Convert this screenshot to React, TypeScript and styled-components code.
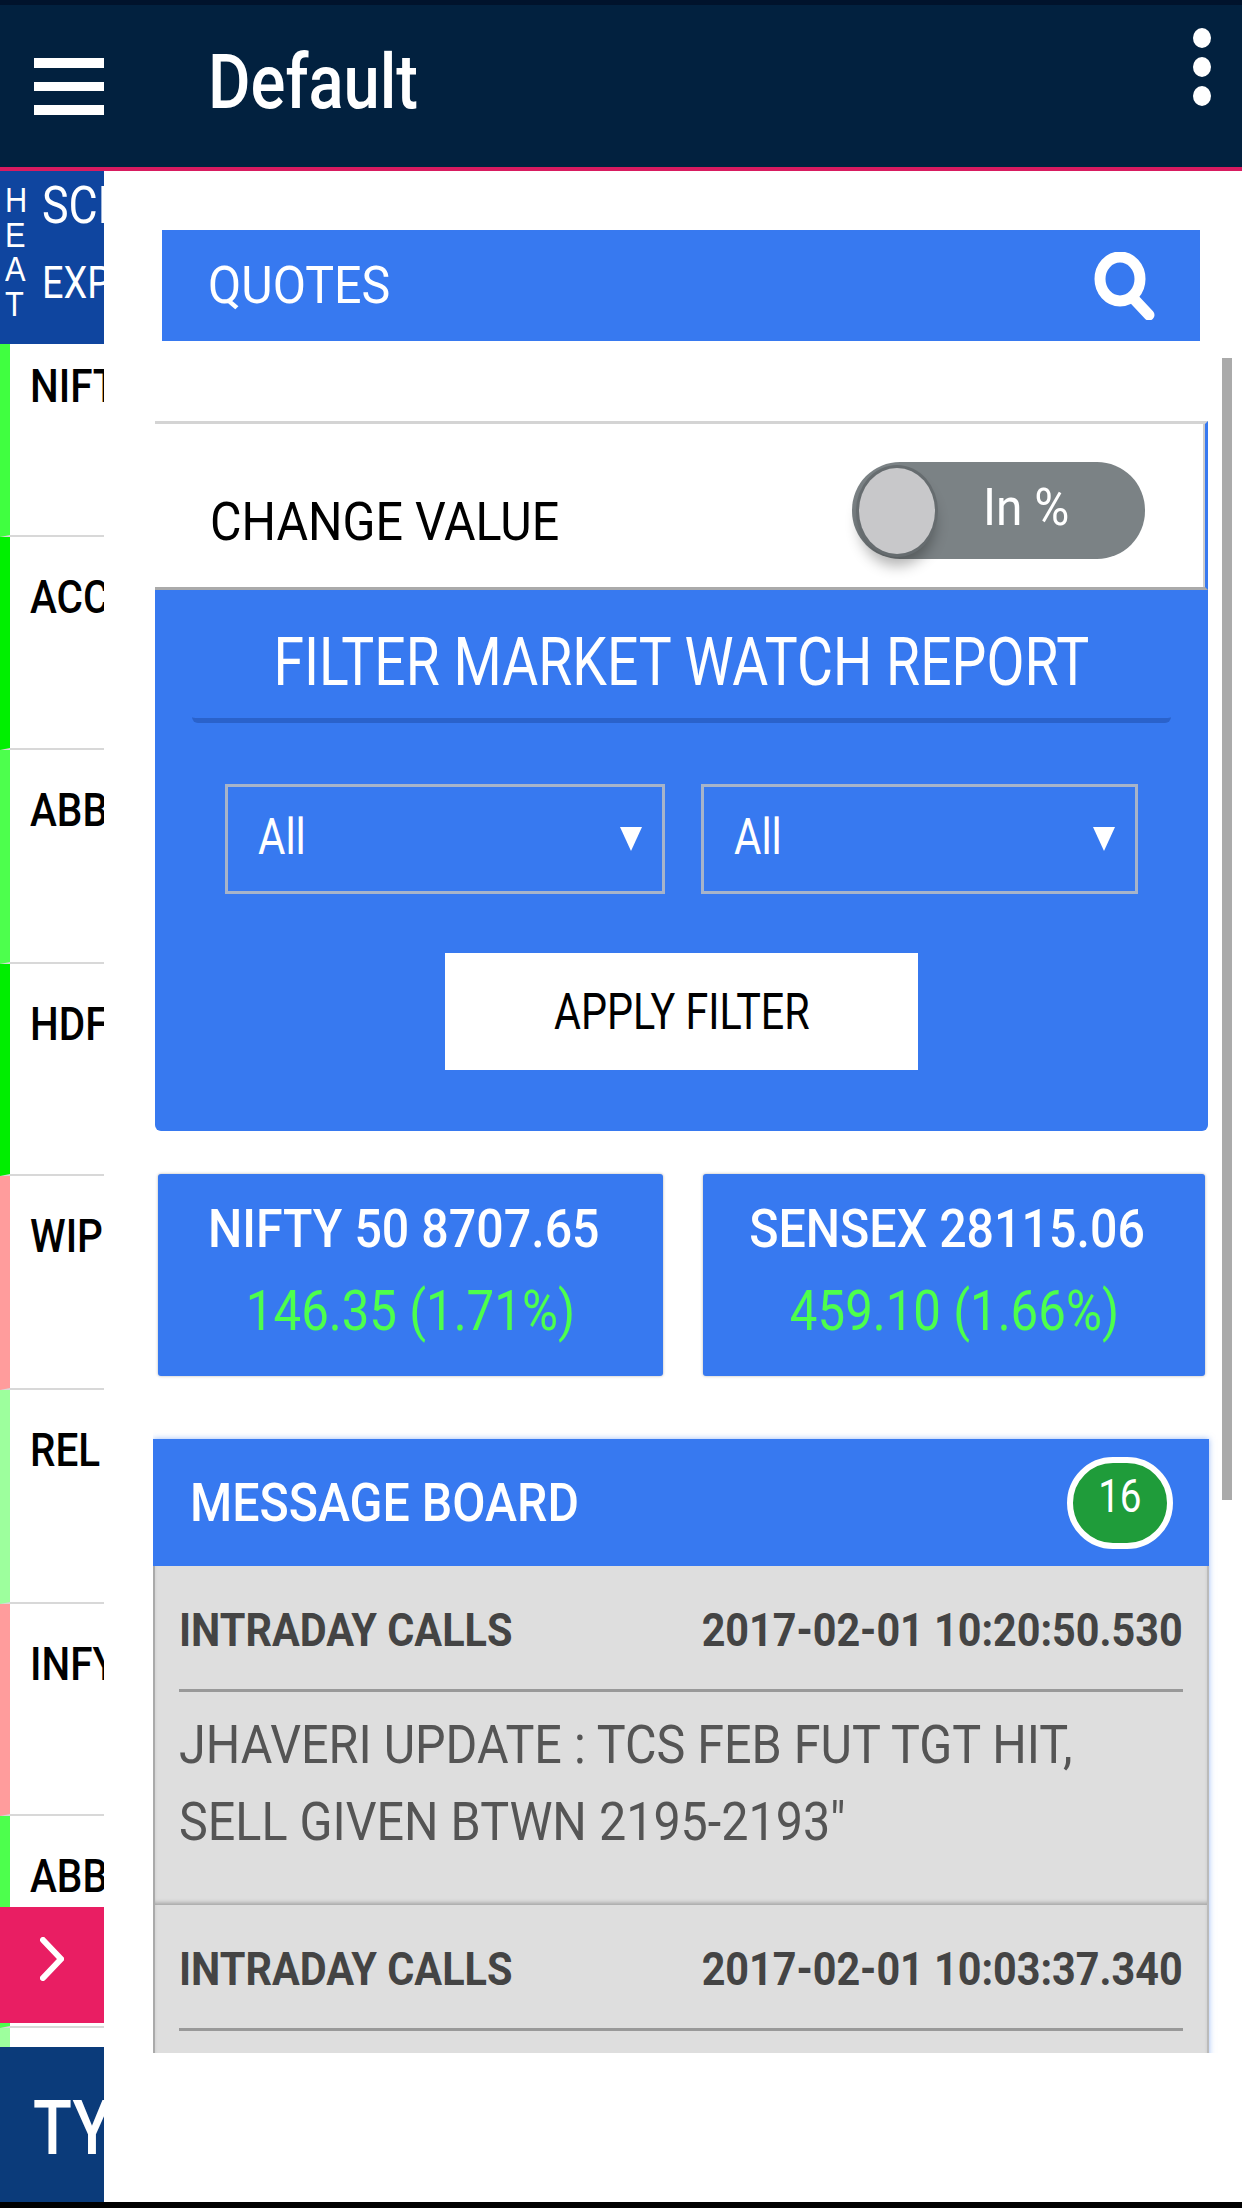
import React from 'react';
import styled, { createGlobalStyle, css } from 'styled-components';

// the screenshot is stretched vertically, so text is narrowed to match
const narrow = (sx: number, origin = 'left') => css`
  display: inline-block;
  white-space: nowrap;
  transform: scaleX(${sx});
  transform-origin: ${origin} center;
`;

const GlobalStyle = createGlobalStyle`
  html, body {
    margin: 0;
    padding: 0;
    background: #fff;
    font-family: Roboto, "Liberation Sans", sans-serif;
  }
  * { box-sizing: border-box; }
`;

const Page = styled.div`
  position: relative;
  width: 1242px;
  height: 2208px;
  display: flex;
  flex-direction: column;
  overflow: hidden;
  background: #000;
`;

const Header = styled.header`
  height: 171px;
  flex: none;
  display: flex;
  align-items: flex-start;
  background: #02213f;
  border-top: 5px solid #01132c;
  border-bottom: 4px solid #d81b60;
  padding: 0 31px 0 34px;
`;

const Burger = styled.div`
  width: 70px;
  margin-top: 53px;
  display: flex;
  flex-direction: column;
  gap: 14px;
  span {
    display: block;
    height: 9.5px;
    background: #fff;
  }
`;

const Title = styled.h1`
  ${narrow(0.857)};
  margin: 32px 0 0 104px;
  font-size: 76px;
  line-height: 90px;
  font-weight: 500;
  color: #fff;
`;

const Dots = styled.div`
  margin: 23px 0 0 auto;
  display: flex;
  flex-direction: column;
  gap: 9px;
  span {
    display: block;
    width: 18px;
    height: 20px;
    border-radius: 50%;
    background: #fff;
  }
`;

const Body = styled.div`
  flex: 1;
  display: flex;
  min-height: 0;
  background: #fff;
`;

const Sidebar = styled.aside`
  position: relative;
  width: 104px;
  flex: none;
  overflow: hidden;
  background: #fff;
`;

const SideHead = styled.div`
  height: 173px;
  display: flex;
  background: #0f459f;
  color: #fff;
  overflow: hidden;
`;

const HeatWord = styled.div`
  width: 34px;
  flex: none;
  padding: 12px 0 0 5px;
  font-family: "Liberation Sans", sans-serif;
  font-size: 35px;
  line-height: 34.5px;
  span {
    ${narrow(0.88)};
    display: block;
  }
`;

const SideColumns = styled.div`
  padding: 5px 0 0 8px;
`;

const ScripLabel = styled.div`
  ${narrow(0.86)};
  display: block;
  font-size: 52px;
  line-height: 60px;
`;

const ExpLabel = styled.div`
  ${narrow(0.86)};
  display: block;
  margin-top: 22px;
  font-size: 44px;
  line-height: 50px;
`;

const StockRow = styled.div<{ $bar: string; $height: number }>`
  height: ${(p) => p.$height}px;
  border-left: 10px solid ${(p) => p.$bar};
  border-bottom: 2px solid #d8d8d8;
  padding: 33px 0 0 20px;
  overflow: hidden;
  font-size: 46px;
  line-height: 54px;
  font-weight: 500;
  color: #000;
  &:nth-child(2) {
    padding-top: 15px;
  }
  span {
    ${narrow(0.88)};
  }
`;

const NextTab = styled.div`
  position: absolute;
  left: 0;
  top: 1736px;
  width: 104px;
  height: 116px;
  display: flex;
  align-items: center;
  padding: 0 0 12px 40px;
  background: #e91e63;
`;

const TypeBar = styled.div`
  position: absolute;
  left: 0;
  bottom: 0;
  width: 104px;
  height: 155px;
  padding: 36px 0 0 33px;
  overflow: hidden;
  background: #0b3b7a;
  color: #fff;
  font-size: 76px;
  line-height: 90px;
  font-weight: 500;
  span {
    ${narrow(0.84)};
  }
`;

const Main = styled.main`
  flex: 1;
  min-width: 0;
`;

const QuotesBar = styled.div`
  height: 111px;
  margin: 59px 42px 0 58px;
  padding: 0 44px 0 46px;
  display: flex;
  align-items: center;
  justify-content: space-between;
  background: #3779f0;
  color: #fff;
`;

const QuotesTitle = styled.span`
  ${narrow(0.93)};
  font-size: 52px;
`;

const ScrollArea = styled.div`
  position: relative;
  height: 1712px;
  margin-left: 49px;
  padding: 80px 34px 0 0;
  overflow: hidden;
`;

const ScrollThumb = styled.div`
  position: absolute;
  top: 17px;
  right: 10px;
  width: 10px;
  height: 1142px;
  background: #aaa;
`;

const ToggleCard = styled.div`
  height: 169px;
  margin-left: 2px;
  padding: 38px 60px 0 55px;
  display: flex;
  align-items: flex-start;
  justify-content: space-between;
  background: #fff;
  border-top: 3px solid #d4d4d4;
  border-right: 3px solid #3779f0;
  border-bottom: 3px solid #aaa;
  box-shadow: inset -2px 0 0 #ccc;
`;

const ChangeLabel = styled.span`
  ${narrow(0.896)};
  margin-top: 28px;
  font-size: 54px;
  line-height: 64px;
  color: #000;
`;

const Toggle = styled.div`
  width: 293px;
  height: 97px;
  display: flex;
  align-items: center;
  padding-left: 7px;
  border-radius: 48px;
  background: #7b8285;
`;

const Knob = styled.div`
  width: 76px;
  height: 86px;
  flex: none;
  border-radius: 50%;
  background: #c8c8ca;
  box-shadow: 0 0 0 3px #666c6f, 0 12px 14px rgba(0, 0, 0, 0.3);
`;

const ToggleText = styled.span`
  ${narrow(0.92)};
  margin: 0 0 6px 48px;
  font-size: 52px;
  color: #fff;
`;

const FilterPanel = styled.section`
  height: 541px;
  margin-left: 2px;
  padding-top: 33px;
  background: #3779f0;
  border-radius: 0 0 6px 6px;
  color: #fff;
`;

const FilterTitle = styled.h2`
  margin: 0 37px;
  padding-bottom: 12px;
  height: 100px;
  border-bottom: 5px solid #2a62cb;
  border-radius: 0 0 6px 6px;
  text-align: center;
  font-size: 66px;
  line-height: 80px;
  font-weight: 400;
  span {
    ${narrow(0.837, 'center')};
  }
`;

const SelectRow = styled.div`
  margin: 61px 0 0 70px;
  display: flex;
  gap: 36px;
`;

const FakeSelect = styled.div<{ $width: number }>`
  width: ${(p) => p.$width}px;
  height: 110px;
  padding: 0 20px 0 30px;
  display: flex;
  align-items: center;
  justify-content: space-between;
  border: 3px solid #a7b4c9;
  font-size: 50px;
  span {
    ${narrow(0.84)};
    margin-bottom: 5px;
  }
  &::after {
    content: '';
    border-left: 11px solid transparent;
    border-right: 11px solid transparent;
    border-top: 24px solid #fff;
  }
`;

const ApplyButton = styled.div`
  width: 473px;
  height: 117px;
  margin: 59px auto 0 290px;
  display: flex;
  align-items: center;
  justify-content: center;
  background: #fff;
  color: #000;
  font-size: 50px;
  span {
    ${narrow(0.825, 'center')};
  }
`;

const IndexRow = styled.div`
  margin: 43px 0 0 5px;
  display: flex;
  gap: 40px;
`;

const IndexCard = styled.div<{ $width: number }>`
  width: ${(p) => p.$width}px;
  height: 202px;
  padding-top: 25px;
  text-align: center;
  background: #3779f0;
  border-radius: 3px;
  box-shadow: 0 0 3px rgba(0, 0, 0, 0.3);
`;

const IndexName = styled.div`
  padding-right: 14px;
  font-size: 54px;
  line-height: 60px;
  font-weight: 500;
  color: #fff;
  span {
    ${narrow(0.895, 'center')};
  }
`;

const IndexChange = styled.div`
  margin-top: 21px;
  font-size: 56px;
  line-height: 62px;
  color: #4dff4d;
  span {
    ${narrow(0.878, 'center')};
  }
`;

const Board = styled.section`
  width: 1056px;
  margin-top: 63px;
  box-shadow: 0 0 6px rgba(55, 121, 240, 0.5);
`;

const BoardHead = styled.div`
  height: 127px;
  padding: 0 36px 0 37px;
  display: flex;
  align-items: center;
  justify-content: space-between;
  background: #3779f0;
  color: #fff;
`;

const BoardTitle = styled.span`
  ${narrow(0.894)};
  font-size: 54px;
  font-weight: 500;
`;

const Badge = styled.div`
  width: 106px;
  height: 92px;
  padding-top: 8px;
  text-align: center;
  border: 6px solid #fff;
  border-radius: 46px;
  background: #1f9c3a;
  font-size: 46px;
  line-height: 50px;
  span {
    ${narrow(0.84, 'center')};
  }
`;

const Message = styled.article`
  height: 339px;
  padding: 0 24px 0 24px;
  background: #dedede;
  border-left: 2px solid #aaa;
  border-right: 2px solid #bbb;
  box-shadow: inset 0 -4px 4px -2px #a0a0a0;
  color: #444;
`;

const MessageTop = styled.div`
  height: 126px;
  padding-top: 34px;
  display: flex;
  justify-content: space-between;
  border-bottom: 3px solid #999;
  font-size: 46px;
  line-height: 60px;
  font-weight: 700;
`;

const MessageKind = styled.span`
  ${narrow(0.9)};
`;

const MessageTime = styled.span`
  ${narrow(0.898, 'right')};
`;

const MessageText = styled.p`
  margin: 0;
  padding-top: 14px;
  font-size: 54px;
  line-height: 77px;
  color: #555;
  white-space: nowrap;
  span {
    ${narrow(0.897)};
    display: block;
  }
`;

const BottomStrip = styled.div`
  height: 6px;
  flex: none;
  background: #000;
`;

const stocks = [
  { name: 'NIFTY', bar: '#40ff40', height: 193 },
  { name: 'ACC', bar: '#00f000', height: 213 },
  { name: 'ABB', bar: '#4dff4d', height: 214 },
  { name: 'HDFC', bar: '#00ee00', height: 212 },
  { name: 'WIPRO', bar: '#ff9c9c', height: 214 },
  { name: 'REL', bar: '#9dff9d', height: 214 },
  { name: 'INFY', bar: '#ff9c9c', height: 212 },
  { name: 'ABB', bar: '#4dff4d', height: 212 },
  { name: '', bar: '#9dff9d', height: 100 },
];

const messages = [
  {
    time: '2017-02-01 10:20:50.530',
    lines: ['JHAVERI UPDATE : TCS FEB FUT TGT HIT,', 'SELL GIVEN BTWN 2195-2193"'],
  },
  { time: '2017-02-01 10:03:37.340', lines: [] as string[] },
];

const App: React.FC = () => {
  return (
    <Page>
      <GlobalStyle />
      <Header>
        <Burger>
          <span />
          <span />
          <span />
        </Burger>
        <Title>Default</Title>
        <Dots>
          <span />
          <span />
          <span />
        </Dots>
      </Header>
      <Body>
        <Sidebar>
          <SideHead>
            <HeatWord>
              <span>H</span>
              <span>E</span>
              <span>A</span>
              <span>T</span>
            </HeatWord>
            <SideColumns>
              <ScripLabel>SCRIP</ScripLabel>
              <ExpLabel>EXPIRY</ExpLabel>
            </SideColumns>
          </SideHead>
          {stocks.map((s, i) => (
            <StockRow key={i} $bar={s.bar} $height={s.height}>
              <span>{s.name}</span>
            </StockRow>
          ))}
          <NextTab>
            <svg width="24" height="44" viewBox="0 0 24 44" fill="none">
              <polyline points="3,3 21,22 3,41" stroke="#fff" strokeWidth="6" strokeLinecap="round" strokeLinejoin="miter" />
            </svg>
          </NextTab>
          <TypeBar>
            <span>TYPE</span>
          </TypeBar>
        </Sidebar>
        <Main>
          <QuotesBar>
            <QuotesTitle>QUOTES</QuotesTitle>
            <svg width="62" height="68" viewBox="0 0 62 68" fill="none">
              <ellipse cx="26" cy="27" rx="20" ry="22" stroke="#fff" strokeWidth="11" />
              <line x1="40" y1="47" x2="55" y2="63" stroke="#fff" strokeWidth="11" strokeLinecap="round" />
            </svg>
          </QuotesBar>
          <ScrollArea>
            <ScrollThumb />
            <ToggleCard>
              <ChangeLabel>CHANGE VALUE</ChangeLabel>
              <Toggle>
                <Knob />
                <ToggleText>In %</ToggleText>
              </Toggle>
            </ToggleCard>
            <FilterPanel>
              <FilterTitle>
                <span>FILTER MARKET WATCH REPORT</span>
              </FilterTitle>
              <SelectRow>
                <FakeSelect $width={440}>
                  <span>All</span>
                </FakeSelect>
                <FakeSelect $width={437}>
                  <span>All</span>
                </FakeSelect>
              </SelectRow>
              <ApplyButton>
                <span>APPLY FILTER</span>
              </ApplyButton>
            </FilterPanel>
            <IndexRow>
              <IndexCard $width={505}>
                <IndexName>
                  <span>NIFTY 50 8707.65</span>
                </IndexName>
                <IndexChange>
                  <span>146.35 (1.71%)</span>
                </IndexChange>
              </IndexCard>
              <IndexCard $width={502}>
                <IndexName>
                  <span>SENSEX 28115.06</span>
                </IndexName>
                <IndexChange>
                  <span>459.10 (1.66%)</span>
                </IndexChange>
              </IndexCard>
            </IndexRow>
            <Board>
              <BoardHead>
                <BoardTitle>MESSAGE BOARD</BoardTitle>
                <Badge>
                  <span>16</span>
                </Badge>
              </BoardHead>
              {messages.map((m) => (
                <Message key={m.time}>
                  <MessageTop>
                    <MessageKind>INTRADAY CALLS</MessageKind>
                    <MessageTime>{m.time}</MessageTime>
                  </MessageTop>
                  <MessageText>
                    {m.lines.map((line) => (
                      <span key={line}>{line}</span>
                    ))}
                  </MessageText>
                </Message>
              ))}
            </Board>
          </ScrollArea>
        </Main>
      </Body>
      <BottomStrip />
    </Page>
  );
};

export default App;
